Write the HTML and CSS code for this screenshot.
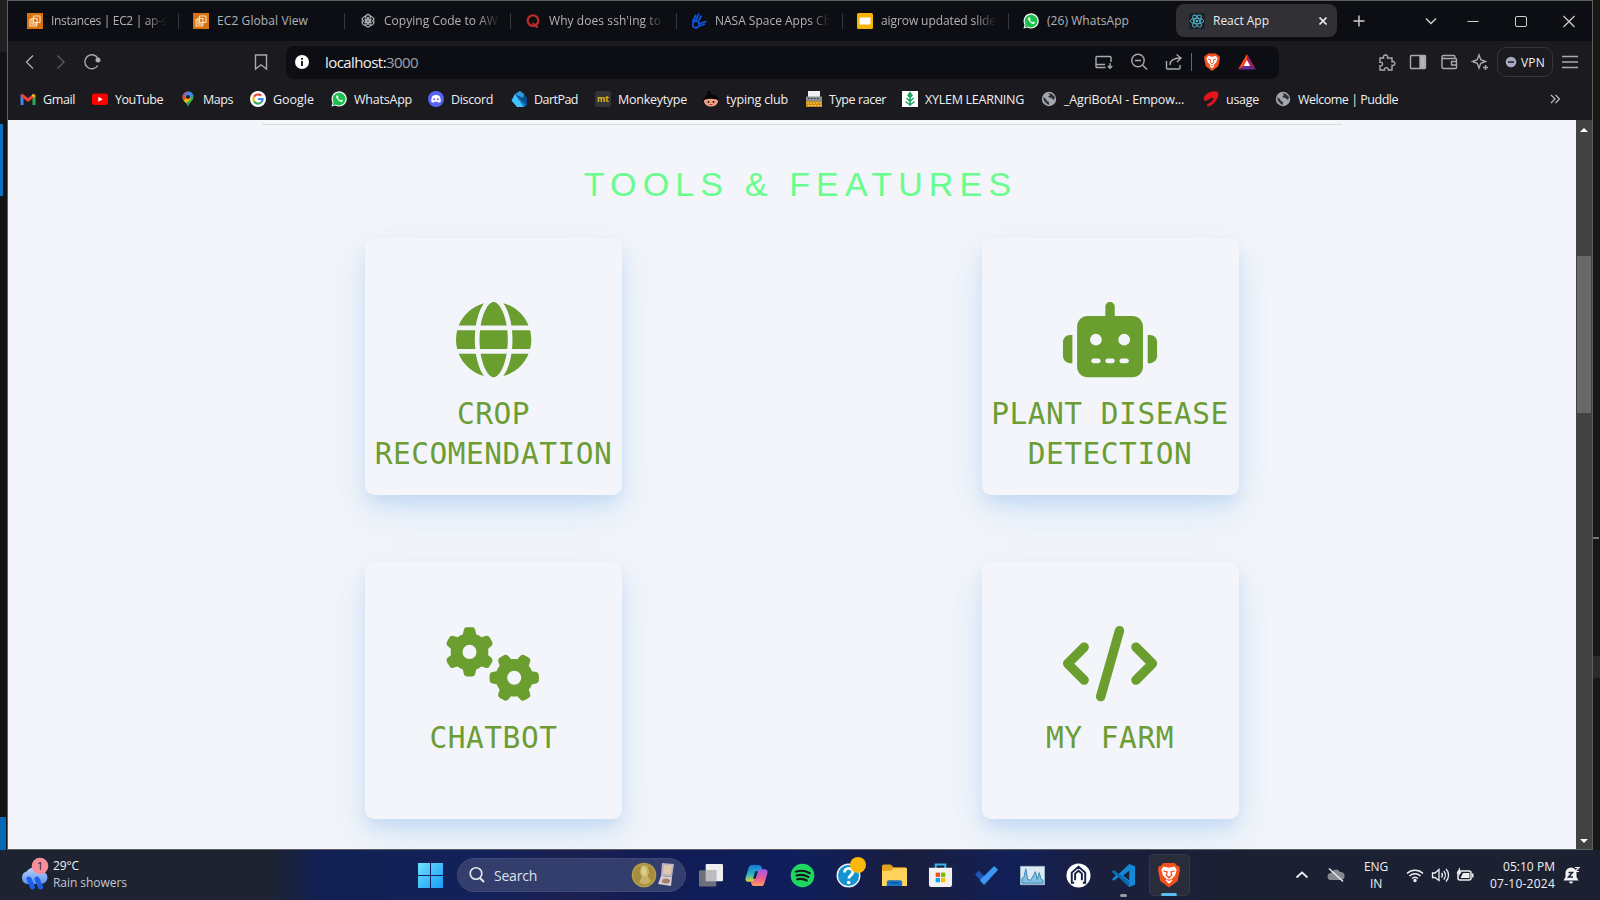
FILE: index.html
```html
<!DOCTYPE html>
<html lang="en">
<head>
<meta charset="utf-8">
<title>React App</title>
<link rel="stylesheet" href="styles.css">
</head>
<body>
<svg class="defs" width="0" height="0" aria-hidden="true">
  <defs>
    <symbol id="ec2" viewBox="0 0 16 16"><rect width="16" height="16" fill="#d9730f"/><g fill="none" stroke="#fbe3c8" stroke-width="1.1"><rect x="6.5" y="3" width="6.5" height="6.5" rx=".5"/><path d="M5 6.5H3V13h6.500v-2"/><rect x="5" y="5.500" width="5" height="5.500"/></g></symbol>
    <symbol id="whatsapp" viewBox="0 0 16 16"><path d="M.5 15.600l1-4A7.600 7.600 0 1 1 4.500 14.600z" fill="#fff"/><path d="M1.700 14.400l.9-3.100a6.400 6.400 0 1 1 2.200 2.200z" fill="#1fbf4f"/><path d="M5.500 4.500c-1.800 1.800 3 7 5.200 6.400 1.300-.5 1.200-1.500.9-1.700l-1.400-.7-.9.9c-1-.4-2-1.400-2.400-2.300l.7-.9-.7-1.600z" fill="#fff"/></symbol>
    <symbol id="globe" viewBox="0 0 16 16"><circle cx="8" cy="8" r="7.200" fill="#a3a7ae"/><path d="M2 6l3 2 1 2 2 1v3l-2-1-3-3zM7 2l2 2-2 2 3 1 3 2 1-3-3-3z" fill="#303238"/></symbol>
    <symbol id="lion" viewBox="0 0 20 20"><path d="M6 1.500h8l2 2 1.500.2.300 3-1.600 7.500L10 19l-6.200-4.800L2.200 6.700l.3-3L4 3.500z" fill="#f4511e"/><path d="M6 4l4 .8L14 4l1.500 2.500-1.300 4L11.500 13l1 1-2.500 2.300L7.500 14l1-1-2.700-2.500-1.300-4z" fill="#fff"/><path d="M6 7l2.700.8L8 10l2 2 2-2-.7-2.200L14 7M8.700 13.200l1.300.6 1.300-.6" fill="none" stroke="#f4511e" stroke-width=".9"/></symbol>
  </defs>
</svg>

<div class="screen">
  <div class="desktop">
    <div class="edge edge-left"><i class="blue-top"></i><i class="blue-bottom"></i></div>

    <div class="window">
      <div class="tabs">
        <div class="tab"><svg viewBox="0 0 16 16"><use href="#ec2"/></svg><span class="label fade"><b data-w="116">Instances | EC2 | ap-s</b></span></div>
        <div class="tab"><svg viewBox="0 0 16 16"><use href="#ec2"/></svg><span class="label"><b data-w="91">EC2 Global View</b></span></div>
        <div class="tab"><svg viewBox="0 0 16 16" fill="none" stroke="#b9bbc0" stroke-width=".8"><path d="M8 1.200a3 3 0 0 1 2.900 2.100l3 1.800v5.600L8 14.200l-5.900-3.500V5.100l3-1.800A3 3 0 0 1 8 1.200z"/><ellipse cx="8" cy="5.600" rx="2.800" ry="3.800"/><ellipse cx="8" cy="5.600" rx="2.800" ry="3.800" transform="rotate(60 8 8)"/><ellipse cx="8" cy="5.600" rx="2.800" ry="3.800" transform="rotate(120 8 8)"/><ellipse cx="8" cy="5.600" rx="2.800" ry="3.800" transform="rotate(180 8 8)"/><ellipse cx="8" cy="5.600" rx="2.800" ry="3.800" transform="rotate(240 8 8)"/><ellipse cx="8" cy="5.600" rx="2.800" ry="3.800" transform="rotate(300 8 8)"/></svg><span class="label fade"><b data-w="114">Copying Code to AW</b></span></div>
        <div class="tab"><svg viewBox="0 0 16 16" fill="none" stroke="#b92b27" stroke-width="2.300"><circle cx="8" cy="7.600" r="5.300"/><path d="M7.500 10.500c2 0 2.500 3.600 5.500 3.500"/></svg><span class="label fade"><b data-w="112">Why does ssh'ing to</b></span></div>
        <div class="tab"><svg viewBox="0 0 16 16" fill="none" stroke="#1155e0" stroke-width="1.700"><circle cx="5" cy="11.500" r="3.300"/><path d="M1.500 9L5 2M4.500 8L8 .5M7 8.500l3.500-6M8.500 10.500l7-2M8 13l6-2"/></svg><span class="label fade"><b data-w="116">NASA Space Apps Ch</b></span></div>
        <div class="tab"><svg viewBox="0 0 16 16"><rect width="16" height="16" rx="1.500" fill="#f4b400"/><rect x="2.500" y="4.500" width="11" height="7" fill="#fff"/></svg><span class="label fade"><b data-w="115">aigrow updated slide</b></span></div>
        <div class="tab last"><svg viewBox="0 0 16 16"><use href="#whatsapp"/></svg><span class="label"><b data-w="82">(26) WhatsApp</b></span></div>
        <div class="tab active"><svg viewBox="0 0 16 16"><rect width="16" height="16" rx="1.500" fill="#1d2026"/><g fill="none" stroke="#4fb5cc" stroke-width=".9"><ellipse cx="8" cy="8" rx="6.800" ry="2.700"/><ellipse cx="8" cy="8" rx="6.800" ry="2.700" transform="rotate(60 8 8)"/><ellipse cx="8" cy="8" rx="6.800" ry="2.700" transform="rotate(120 8 8)"/></g><circle cx="8" cy="8" r="1.300" fill="#4fb5cc"/></svg><span class="label"><b data-w="56">React App</b></span><svg class="x" viewBox="0 0 10 10"><path d="M1.500 1.500l7 7m0-7l-7 7" stroke="#f2f2f2" stroke-width="1.700"/></svg></div>
        <svg class="ctl plus" viewBox="0 0 20 20"><path d="M10 4.500v11M4.500 10h11"/></svg>
        <svg class="ctl down" viewBox="0 0 20 20"><path d="M5 7.500l5 5 5-5"/></svg>
        <svg class="ctl min" viewBox="0 0 20 20"><path d="M4.500 10.500h11"/></svg>
        <svg class="ctl max" viewBox="0 0 20 20"><rect x="4.500" y="5.500" width="11" height="10" rx="1.500"/></svg>
        <svg class="ctl close" viewBox="0 0 20 20"><path d="M4.500 5l11 11m0-11l-11 11"/></svg>
      </div>

      <div class="toolbar">
        <svg class="ic" viewBox="0 0 20 20"><path d="M13 3.500L6.500 10l6.500 6.500"/></svg>
        <svg class="ic fwd" viewBox="0 0 20 20"><path d="M7.500 3.500L14 10l-6.500 6.500"/></svg>
        <svg class="ic reload" viewBox="0 0 20 20"><path d="M15.800 13.500A7 7 0 1 1 16 6.500"/><circle cx="16" cy="8" r="1.800" fill="#b4b5ba"/></svg>
        <svg class="ic mark" viewBox="0 0 20 20"><path d="M4.500 3h11v14L10 12.800 4.500 17z"/></svg>
        <div class="address">
          <svg class="info" viewBox="0 0 20 20"><circle cx="10" cy="10" r="7" fill="#fff"/><path d="M10 9v5M10 6v1.800" stroke="#15161b" stroke-width="1.900"/></svg>
          <span class="url"><b data-w="93">localhost:<i>3000</i></b></span>
          <svg class="ic" viewBox="0 0 20 20"><path d="M11.500 15.500H3a1 1 0 0 1-1-1V5.500a1 1 0 0 1 1-1h13a1 1 0 0 1 1 1V10M2 12.500h9M16 11v5M13.800 14l2.200 2.200 2.200-2.200"/></svg>
          <svg class="ic g15" viewBox="0 0 20 20"><circle cx="9" cy="8.500" r="6.200"/><path d="M13.500 13l4.500 4.500M6 8.500h6"/></svg>
          <svg class="ic g15" viewBox="0 0 20 20"><path d="M2.500 9v7a1 1 0 0 0 1 1H15a1 1 0 0 0 1-1v-3M6 13c0-5 3-7 10.500-7M12.500 2.500L17 6l-4 4"/></svg>
          <i class="sep"></i>
          <svg class="pic brave" viewBox="0 0 20 20"><use href="#lion"/></svg>
          <svg class="pic g15" viewBox="0 0 20 20"><path d="M10 2L1 17.500l9-5z" fill="#ff4724"/><path d="M10 2l9 15.500-9-5z" fill="#9e1f63"/><path d="M1 17.500h18l-9-5z" fill="#662d91"/><path d="M10 8l3.200 6H6.800z" fill="#fff"/></svg>
        </div>
        <svg class="ic puzzle" viewBox="0 0 20 20"><path d="M3 6h3.500c-1.200-4 5.200-4 4 0H15v3.700c3.800-1 3.800 4.600 0 3.600V18h-3.700c.7-3.200-4.600-3.200-3.800 0H3v-4.200c3.400.7 3.400-4.300 0-3.600z"/></svg>
        <svg class="ic g11" viewBox="0 0 20 20"><rect x="2.500" y="3.500" width="15" height="13" rx="1"/><path d="M12 4h5v12h-5z" fill="#b4b5ba"/></svg>
        <svg class="ic g11" viewBox="0 0 20 20"><path d="M16 6.500V5a1.500 1.500 0 0 0-1.500-1.500h-10a1.500 1.500 0 0 0 0 3H16.500a1 1 0 0 1 1 1v8a1 1 0 0 1-1 1h-12A1.500 1.500 0 0 1 3 15V5M17.500 9.500H12.500v3.500h5"/></svg>
        <svg class="ic g11" viewBox="0 0 20 20"><path d="M9 3l1.800 4.700L15.500 9.500l-4.700 1.800L9 16l-1.800-4.700L2.500 9.500l4.700-1.800zM15.500 13v5M13 15.500h5"/></svg>
        <div class="vpn"><svg viewBox="0 0 12 12"><circle cx="6" cy="6" r="5.300" fill="#a5a9c2"/><path d="M3 6h6" stroke="#1b1b20" stroke-width="1.500"/></svg><b data-w="24">VPN</b></div>
        <svg class="ic menu" viewBox="0 0 20 20"><path d="M2 4.500h16M2 10h16M2 15.500h16"/></svg>
      </div>

      <div class="bookmarks">
        <div><svg viewBox="0 0 16 16" fill="none" stroke-width="3"><path d="M2 14V3.500" stroke="#4285f4"/><path d="M14 14V3.500" stroke="#34a853"/><path d="M1.500 4L8 9l6.500-5" stroke="#ea4335"/><path d="M12.500 5.500L14.500 4" stroke="#fbbc04"/></svg><b data-w="32">Gmail</b></div>
        <div><svg viewBox="0 0 16 16"><rect y="2.500" width="16" height="11.500" rx="2.500" fill="#f00"/><path d="M6.300 5.700v5l4.400-2.500z" fill="#fff"/></svg><b data-w="48">YouTube</b></div>
        <div><svg viewBox="0 0 16 16"><path d="M2.500 6a5.500 5.500 0 0 1 11 0c0 4-4.300 5-5.500 10C7 11.500 2.500 10 2.500 6z" fill="#34a853"/><path d="M2.500 6A5.500 5.500 0 0 1 8 .5V6L4 10.300C3 9 2.500 7.800 2.500 6z" fill="#ea4335"/><path d="M8 .5A5.500 5.500 0 0 1 13.300 4.500L8 10 4 4z" fill="#4285f4"/><path d="M3.700 9.800L9 4l2 4-5 4z" fill="#fbbc04"/><circle cx="8" cy="6" r="2" fill="#222"/></svg><b data-w="30">Maps</b></div>
        <div><svg viewBox="0 0 16 16"><circle cx="8" cy="8" r="8" fill="#fff"/><g fill="none" stroke-width="2.200"><path d="M11.200 4.800A4.600 4.600 0 0 0 4 5.700" stroke="#ea4335"/><path d="M4 5.700a4.600 4.600 0 0 0 0 4.600" stroke="#fbbc04"/><path d="M4 10.300a4.600 4.600 0 0 0 7 1.200" stroke="#34a853"/><path d="M11 11.500A4.600 4.600 0 0 0 12.600 8H8" stroke="#4285f4"/></g></svg><b data-w="41">Google</b></div>
        <div><svg viewBox="0 0 16 16"><use href="#whatsapp"/></svg><b data-w="58">WhatsApp</b></div>
        <div><svg viewBox="0 0 16 16"><circle cx="8" cy="8" r="8" fill="#5865f2"/><path d="M4.500 5c2-1.300 5-1.300 7 0 1 2 1.500 4 1.300 5.500-1 .8-2 1.200-2.500 1.200l-.7-1H6.400l-.7 1c-.7 0-1.600-.4-2.500-1.200C3 9 3.500 7 4.500 5z" fill="#fff"/><circle cx="6.200" cy="8.200" r="1" fill="#5865f2"/><circle cx="9.800" cy="8.200" r="1" fill="#5865f2"/></svg><b data-w="42">Discord</b></div>
        <div><svg viewBox="0 0 16 16"><path d="M1 9L4 3l5-3 4 3 3 4v7l-3 2H6z" fill="#0b4e8f"/><path d="M4 3L.5 9.500 6 16h7z" fill="#40c4ff"/><path d="M4 3l5-3 4 3-1 4z" fill="#2b9bdc"/><path d="M4 3l11 11-2 2z" fill="#1a78bd"/></svg><b data-w="44">DartPad</b></div>
        <div><svg viewBox="0 0 16 16"><rect width="16" height="16" rx="3" fill="#323437"/><text x="8" y="11" text-anchor="middle" font-size="8.500" font-weight="700" fill="#e2b714">mt</text></svg><b data-w="69">Monkeytype</b></div>
        <div><svg viewBox="0 0 16 16"><circle cx="6" cy="2" r="2" fill="#050505"/><ellipse cx="8" cy="10" rx="7" ry="5.500" fill="#f0a184"/><path d="M0 10C0 1 16 1 16 10c-3-3-13-3-16 0z" fill="#080808"/><circle cx="5.500" cy="11" r=".9"/><circle cx="10.500" cy="11" r=".9"/><path d="M6.500 13.500h3" stroke="#a33"/></svg><b data-w="62">typing club</b></div>
        <div><svg viewBox="0 0 16 16"><path d="M2 0h12v6H2z" fill="#eef0f4"/><path d="M0 5.500h16V10H0z" fill="#8b8f97"/><path d="M0 10h16v6H0z" fill="#c98d12"/><path d="M2 7.500h12" stroke="#33363c" stroke-dasharray="1.500 1.500"/><path d="M1 12h14M2 14.500h14" stroke="#f4d060" stroke-dasharray="2 1"/></svg><b data-w="57">Type racer</b></div>
        <div><svg viewBox="0 0 16 16"><path d="M0 0h16v16H0z" fill="#fff"/><path d="M8 15V4M8 14L3.500 10.500M8 14l4.500-3.500M8 10.500L4.500 7M8 10.500L11.500 7M8 6.500l-2-2 2-3 2 3z" stroke="#1fa463" stroke-width="1.500" fill="#1fa463"/></svg><b data-w="99">XYLEM LEARNING</b></div>
        <div><svg viewBox="0 0 16 16"><use href="#globe"/></svg><b data-w="120">_AgriBotAI - Empow...</b></div>
        <div><svg viewBox="0 0 16 16"><path d="M.8 7C2 2 11-1 14.500.8c2 2 .5 6.500-2.500 10.200-2 2.500-6 5-7.500 4.500-1.300-.8-.3-2.300 2-3.500 2.500-1.500 4.500-4 3.500-5-1.200-.8-4 1.500-6 2.500-2 .9-3.400 0-3.200-2.500z" fill="#e4141c"/></svg><b data-w="33">usage</b></div>
        <div><svg viewBox="0 0 16 16"><use href="#globe"/></svg><b data-w="100">Welcome | Puddle</b></div>
        <svg class="more" viewBox="0 0 12 12"><path d="M2 2l4 4-4 4M6.500 2l4 4-4 4"/></svg>
      </div>

      <div class="viewport">
        <main class="page">
          <hr>
          <h1>TOOLS &amp; FEATURES</h1>
          <section class="cards">
            <article class="card">
              <svg viewBox="0 0 512 512"><path d="M352 256c0 22.200-1.200 43.600-3.300 64H163.300c-2.200-20.400-3.300-41.800-3.300-64s1.200-43.600 3.300-64H348.700c2.200 20.400 3.300 41.800 3.300 64zm28.800-64H503.900c5.300 20.500 8.100 41.900 8.100 64s-2.800 43.500-8.100 64H380.800c2.100-20.600 3.200-42 3.200-64s-1.100-43.400-3.200-64zm112.600-32H376.700c-10-63.900-29.800-117.400-55.300-151.600c78.300 20.700 142 77.500 171.900 151.600zm-149.100 0H167.700c6.100-36.400 15.500-68.600 27-94.700c10.500-23.600 22.200-40.700 33.500-51.500C239.400 3.200 248.700 0 256 0s16.600 3.200 27.800 13.800c11.300 10.800 23 27.900 33.500 51.500c11.600 26 20.900 58.200 27 94.700zm-209 0H18.600C48.600 85.900 112.200 29.100 190.600 8.400C165.100 42.600 145.300 96.100 135.300 160zM8.100 192H131.200c-2.100 20.600-3.200 42-3.200 64s1.100 43.400 3.200 64H8.100C2.800 299.500 0 278.100 0 256s2.800-43.500 8.100-64zM194.700 446.600c-11.600-26-20.900-58.200-27-94.600H344.300c-6.100 36.400-15.500 68.600-27 94.600c-10.500 23.600-22.200 40.700-33.500 51.500C272.600 508.800 263.300 512 256 512s-16.600-3.200-27.800-13.800c-11.300-10.800-23-27.900-33.500-51.500zM135.300 352c10 63.900 29.800 117.400 55.300 151.600C112.200 482.900 48.600 426.100 18.600 352H135.300zm358.100 0c-30 74.100-93.600 130.900-171.900 151.600c25.500-34.200 45.200-87.700 55.300-151.600H493.400z"/></svg>
              <h2>CROP<br>RECOMENDATION</h2>
            </article>
            <article class="card">
              <svg viewBox="0 0 640 512"><path d="M320 0c17.700 0 32 14.300 32 32V96H472c39.800 0 72 32.200 72 72V440c0 39.800-32.200 72-72 72H168c-39.800 0-72-32.200-72-72V168c0-39.800 32.200-72 72-72H288V32c0-17.700 14.300-32 32-32zM208 384c-8.800 0-16 7.200-16 16s7.200 16 16 16h32c8.800 0 16-7.200 16-16s-7.200-16-16-16H208zm96 0c-8.800 0-16 7.200-16 16s7.200 16 16 16h32c8.800 0 16-7.200 16-16s-7.200-16-16-16H304zm96 0c-8.800 0-16 7.200-16 16s7.200 16 16 16h32c8.800 0 16-7.200 16-16s-7.200-16-16-16H400zM264 256a40 40 0 1 0 -80 0 40 40 0 1 0 80 0zm152 40a40 40 0 1 0 0-80 40 40 0 1 0 0 80zM48 224H64V416H48c-26.500 0-48-21.500-48-48V272c0-26.500 21.500-48 48-48zm544 0c26.500 0 48 21.500 48 48v96c0 26.500-21.500 48-48 48H576V224h16z"/></svg>
              <h2>PLANT DISEASE<br>DETECTION</h2>
            </article>
            <article class="card">
              <svg viewBox="0 0 640 512"><path id="gear" d="M308.500 135.300c7.100-6.300 9.900-16.200 6.200-25c-2.300-5.300-4.800-10.500-7.600-15.500L304 89.400c-3-5-6.300-9.900-9.800-14.600c-5.700-7.600-15.700-10.100-24.700-7.100l-28.200 9.300c-10.700-8.800-23-16-36.200-20.900L199 27.100c-1.900-9.300-9.100-16.700-18.500-17.800C173.900 8.400 167.200 8 160.400 8h-.7c-6.800 0-13.500 .4-20.100 1.200c-9.400 1.100-16.600 8.600-18.500 17.800L115 56.100c-13.300 5-25.500 12.100-36.200 20.900L50.500 67.800c-9-3-19-.5-24.700 7.100c-3.500 4.700-6.800 9.600-9.900 14.600l-3 5.300c-2.800 5-5.300 10.200-7.600 15.600c-3.700 8.700-.9 18.600 6.200 25l22.200 19.800C32.600 161.900 32 168.900 32 176s.6 14.100 1.700 20.900L11.500 216.700c-7.100 6.300-9.900 16.200-6.200 25c2.300 5.300 4.800 10.500 7.600 15.600l3 5.200c3 5.100 6.300 9.900 9.900 14.600c5.700 7.600 15.700 10.100 24.700 7.100l28.200-9.300c10.700 8.800 23 16 36.200 20.900l6.100 29.100c1.900 9.300 9.100 16.700 18.500 17.800c6.700 .8 13.500 1.200 20.400 1.200s13.700-.4 20.400-1.200c9.400-1.100 16.600-8.600 18.500-17.800l6.100-29.100c13.300-5 25.500-12.100 36.200-20.900l28.200 9.300c9 3 19 .5 24.700-7.100c3.500-4.700 6.800-9.500 9.800-14.600l3.100-5.400c2.800-5 5.300-10.200 7.600-15.500c3.700-8.700 .9-18.600-6.200-25l-22.200-19.800c1.100-6.800 1.700-13.800 1.700-20.900s-.6-14.100-1.700-20.900l22.200-19.800zM112 176a48 48 0 1 1 96 0 48 48 0 1 1 -96 0z"/><use href="#gear" transform="translate(464 352) rotate(90) translate(-160 -176)"/></svg>
              <h2>CHATBOT</h2>
            </article>
            <article class="card">
              <svg viewBox="0 0 640 512"><path d="M392.800 1.200c-17-4.900-34.700 5-39.600 22l-128 448c-4.900 17 5 34.700 22 39.600s34.700-5 39.600-22l128-448c4.900-17-5-34.700-22-39.600zm80.600 120.100c-12.500 12.500-12.500 32.800 0 45.300L562.700 256l-89.400 89.400c-12.500 12.500-12.500 32.800 0 45.300s32.800 12.500 45.300 0l112-112c12.500-12.500 12.500-32.800 0-45.300l-112-112c-12.500-12.500-32.800-12.500-45.300 0zm-306.700 0c-12.500-12.500-32.800-12.500-45.300 0l-112 112c-12.500 12.500-12.500 32.800 0 45.300l112 112c12.500 12.500 32.800 12.500 45.300 0s12.500-32.800 0-45.300L77.300 256l89.400-89.400c12.500-12.500 12.500-32.800 0-45.300z"/></svg>
              <h2>MY FARM</h2>
            </article>
          </section>
        </main>
        <div class="scrollbar"><svg viewBox="0 0 10 6"><path d="M1 5l4-4 4 4z"/></svg><i></i><svg class="dn" viewBox="0 0 10 6"><path d="M1 1l4 4 4-4z"/></svg></div>
      </div>
    </div>

    <div class="edge edge-right"><i class="tick"></i><i class="block"></i></div>
  </div>

  <footer class="taskbar">
    <div class="weather">
      <svg viewBox="0 0 32 36"><defs><linearGradient id="cl" x2="0" y2="1"><stop stop-color="#b9d2fb"/><stop offset="1" stop-color="#5d94f0"/></linearGradient></defs><path d="M8 27a6.500 6.500 0 0 1-.5-12.500A9 9 0 0 1 22 14a6.500 6.500 0 0 1 0 13z" fill="url(#cl)"/><path d="M10 22l3.500 8M18 22l3.500 8" stroke="#1d5fe6" stroke-width="5" stroke-linecap="round"/><circle cx="21" cy="9" r="8.300" fill="#f78f9b"/><text x="21" y="13" font-size="11.500" text-anchor="middle" fill="#222">1</text></svg>
      <div class="wtext"><b data-w="26">29°C</b><b class="dim" data-w="74">Rain showers</b></div>
    </div>
    <svg class="start" viewBox="0 0 25 25"><defs><linearGradient id="win" x2="1" y2="1"><stop stop-color="#6fe0ff"/><stop offset="1" stop-color="#169bf5"/></linearGradient></defs><path d="M0 0h12v12H0zM13 0h12v12H13zM0 13h12v12H0zM13 13h12v12H13z" fill="url(#win)"/></svg>
    <div class="search">
      <svg class="mag" viewBox="0 0 18 18"><circle cx="8" cy="7.500" r="5.800" fill="none" stroke="#e8e9f0" stroke-width="1.600"/><path d="M12 12l4 4" stroke="#e8e9f0" stroke-width="2"/></svg>
      <b data-w="43">Search</b>
      <svg class="medal" viewBox="0 0 46 28"><circle cx="13" cy="14" r="12.300" fill="#b39a4c"/><circle cx="13" cy="14" r="10.500" fill="#a88d3e"/><path d="M10 5c4-2 8 0 7.500 4l1 3-1.500 1v3l3 4c-3 4-9 4-12 1l3-5-2-4z" fill="#c8b267"/><path d="M11 6c3-1 5 1 4.500 4l.5 3-2 2-3-1-1-4z" fill="#dccb88"/><path d="M31 2l12 1-2 13-11-1z" fill="#b9b2c0"/><path d="M33 4l8 .5-1.300 9-7.700-.5z" fill="#dfc6b0"/><path d="M30 15l11 1-1 9-13-2z" fill="#d4cfd6"/><ellipse cx="35" cy="20" rx="4" ry="2.500" fill="#a97e68"/></svg>
    </div>
    <div class="apps">
      <span><svg viewBox="0 0 26 26"><rect x="8" y="1" width="18" height="18" rx="1" fill="#eceef0"/><rect x="1" y="7.500" width="18" height="17" rx="1" fill="#858585" fill-opacity=".8"/><path d="M8 7.500h11V19H8z" fill="#bdbdbd"/></svg></span>
      <span><svg viewBox="0 0 26 26"><defs><linearGradient id="cpa" x2="0" y2="1"><stop stop-color="#1877d8"/><stop offset=".55" stop-color="#26b6c0"/><stop offset="1" stop-color="#e8d234"/></linearGradient><linearGradient id="cpb" x2="0" y2="1"><stop stop-color="#9a5cf0"/><stop offset=".55" stop-color="#ee5b94"/><stop offset="1" stop-color="#ffa05c"/></linearGradient></defs><path d="M8 2h7c2 0 3 1 3.500 3l.7 2.500h-3.500L12 16c-.7 2.500-1.500 3.500-4 3.500H4.500C2 19.500 1 17.500 1.700 15L5 4.500C5.500 3 6.500 2 8 2z" fill="url(#cpa)"/><path d="M18 24h-7c-2 0-3-1-3.500-3L6.800 19h3.500L14 10c.7-2.500 1.500-3.500 4-3.500h3.500c2.500 0 3.500 2 2.800 4.500L21 21.500c-.5 1.500-1.500 2.500-3 2.500z" fill="url(#cpb)"/><path d="M11.500 8.500h3l-2.500 8H9.500z" fill="#14205a"/></svg></span>
      <span><svg viewBox="0 0 26 26"><circle cx="13" cy="13" r="12.300" fill="#1ed760"/><path d="M6 9c5-1.700 10-1 14.500 1.500M6.800 13c4.500-1.300 8.500-.8 12.300 1.400M7.500 17c3.700-1 7-.6 10 1.200" fill="none" stroke="#11181a" stroke-width="2.200" stroke-linecap="round"/></svg></span>
      <span class="help"><svg viewBox="0 0 26 26"><circle cx="13" cy="13" r="11.700" fill="#1593d1" stroke="#eef6fb" stroke-width="1.500"/><path d="M8.800 10c0-6 9-5.700 8.800-.6 0 3.300-4.300 3-4.300 6.800" fill="none" stroke="#fff" stroke-width="3"/><circle cx="13.200" cy="20.300" r="1.900" fill="#fff"/></svg><i></i></span>
      <span><svg viewBox="0 0 26 26"><path d="M0 3.500a2 2 0 0 1 2-2h7l3 3h12a2 2 0 0 1 2 2V22a2 2 0 0 1-2 2H0z" fill="#e6a21b"/><path d="M0 8h9l3-2.500h14V24H0z" fill="#ffd35a"/><path d="M5 24v-4a2 2 0 0 1 2-2h12a2 2 0 0 1 2 2v4z" fill="#1677c4"/><path d="M8 20.500h10" stroke="#0c5591" stroke-width="1.500"/></svg></span>
      <span><svg viewBox="0 0 26 26"><path d="M8 6V1.500h10V6" fill="none" stroke="#37b8ea" stroke-width="2"/><path d="M1 5h24v17a3 3 0 0 1-3 3H4a3 3 0 0 1-3-3z" fill="#f1f1f1"/><path d="M8 10h4.500v4.500H8z" fill="#f25022"/><path d="M13.500 10H18v4.500h-4.500z" fill="#7fba00"/><path d="M8 15.500h4.500V20H8z" fill="#00a4ef"/><path d="M13.500 15.500H18V20h-4.500z" fill="#ffb900"/></svg></span>
      <span><svg viewBox="0 0 26 26"><path d="M1 12l4-4 6 6-3.500 5z" fill="#1c55b8"/><path d="M21 3l4 4-14.500 16L6 18z" fill="#3c96f2"/></svg></span>
      <span><svg viewBox="0 0 26 26"><path d="M.5 3.500h25v19H.5z" fill="#dbe9f2" stroke="#9fb8c6"/><path d="M2 21v-5l2-1 2-9 2 11 3 1 3-5 2-4 2 8 2-7 2 7 2 1v3z" fill="#83bfe2" stroke="#3585b5"/></svg></span>
      <span><svg viewBox="0 0 26 26"><circle cx="13" cy="13" r="12.500" fill="#fff"/><path d="M8.500 20.500H6V10l7-6 7 6v10.500h-2.500M9.500 18v-7l3.500-3 3.500 3v7" fill="none" stroke="#18214a" stroke-width="2"/></svg></span>
      <span class="run"><svg viewBox="0 0 26 26"><path d="M19 1l6 2.500v19L19 25 8 14.500 3 18.500l-2-1.500 4-4-4-4 2-1.500 5 4zM19 8l-6.500 5 6.500 5z" fill="#1688d8"/><path d="M1 9l2-1.500 16 12V25L8 14.500z" fill="#0b68b0"/></svg></span>
      <span class="run current"><svg viewBox="0 0 20 20"><use href="#lion"/></svg></span>
    </div>
    <div class="tray">
      <svg class="t-up" viewBox="0 0 20 20"><path d="M4.500 12.500L10 7.500l5.500 5" fill="none" stroke="#f0f0f2" stroke-width="1.700"/></svg>
      <svg class="t-cloud" viewBox="0 0 20 20"><path d="M5 15a3.500 3.500 0 0 1 0-7 5 5 0 0 1 9-1 4 4 0 0 1 1 8z" fill="#868a92"/><path d="M3 3.500l14 13" stroke="#f0f0f2" stroke-width="1.400"/></svg>
      <div class="lang"><b data-w="24">ENG</b><b data-w="12">IN</b></div>
      <svg class="t-wifi" viewBox="0 0 20 20" fill="none" stroke="#f0f0f2" stroke-width="1.500"><path d="M2 8.500a11.500 11.500 0 0 1 16 0M4.500 11a8 8 0 0 1 11 0M7 13.500a4.500 4.500 0 0 1 6 0"/><circle cx="10" cy="15.500" r="1" fill="#f0f0f2"/></svg>
      <svg class="t-vol" viewBox="0 0 20 20" fill="none" stroke="#f0f0f2" stroke-width="1.300"><path d="M2.500 8H5l4-3.500v11L5 12.500H2.500zM11.500 8a3.500 3.500 0 0 1 0 4.500M13.700 6a6.500 6.500 0 0 1 0 8.500M16 4a9 9 0 0 1 0 12.500"/></svg>
      <svg class="t-bat" viewBox="0 0 20 20"><rect x="3" y="6" width="13" height="9" rx="2" fill="none" stroke="#f0f0f2" stroke-width="1.500"/><path d="M8 8h6.500v5H5.500z" fill="#f0f0f2"/><path d="M17 8.500h1.500v4H17z" fill="#f0f0f2"/><path d="M5 2L1.500 8.500H4L3 12l4-5.500H5z" fill="#f0f0f2"/></svg>
      <div class="clock"><b data-w="52">05:10 PM</b><b data-w="65">07-10-2024</b></div>
      <svg class="t-bell" viewBox="0 0 20 20"><path d="M2.500 15.500L4.500 12V8a5.500 5.500 0 0 1 11 0v4l2 3.500zM8 16.500h4a2 2 0 0 1-4 0z" fill="#f4f4f6"/><path d="M7.500 7.500h4l-4 4.500h4.500" fill="none" stroke="#1b2130" stroke-width="1.500"/><path d="M14 2.500h4L14 6.500h4" fill="none" stroke="#f4f4f6" stroke-width="1.200"/></svg>
    </div>
  </footer>
</div>
<script src="script.js"></script>
</body>
</html>
```

FILE: styles.css
```css
* { box-sizing: border-box; }
body { margin: 0; font-family: "Open Sans", "Noto Sans", sans-serif; overflow: hidden; }
b, i { font-weight: 400; font-style: normal; }
svg { display: block; flex: none; }
.defs { display: none; }
b[data-w] { display: inline-block; white-space: pre; }

.screen { width: 1600px; height: 900px; display: flex; flex-direction: column; background: #141414; overflow: hidden; }
.desktop { height: 850px; flex: none; display: flex; }

/* slivers of the window behind the browser */
.edge { width: 7px; flex: none; display: flex; flex-direction: column; background: #131313; }
.edge-left { border-top: 52px solid #202020; }
.blue-top { width: 3px; height: 72px; margin-top: 72px; margin-bottom: auto; background: #0c6fc0; }
.edge-left .blue-bottom { width: 6px; height: 33px; background: #0668b3; }
.edge-right { background: #171714; }
.tick { width: 6px; height: 2px; margin-top: 537px; background: #777; }
.block { width: 7px; height: 22px; margin-top: 117px; background: #2b2b29; }

.window { width: 1586px; flex: none; height: 850px; border: 1px solid #5d6063; background: #1b1a1f; display: flex; flex-direction: column; }

.tabs { height: 40px; flex: none; background: #0d0e13; display: flex; align-items: center; padding: 0 0 1px 5px; }
.tab { width: 166px; flex: none; height: 32px; padding-left: 14px; display: flex; align-items: center; gap: 8px; color: #b2b3b8; font-size: 12px; position: relative; }
.tab > svg { width: 16px; height: 16px; }
.tab:not(.last):not(.active)::after { content: ""; position: absolute; right: 0; top: 8px; width: 1px; height: 16px; background: #36383e; }
.tab:nth-child(3) { padding-left: 15px; }
.tab.last { width: 167px; }
.label { width: 118px; white-space: nowrap; overflow: hidden; }
.fade { -webkit-mask-image: linear-gradient(90deg, #000 80%, transparent 98%); mask-image: linear-gradient(90deg, #000 80%, transparent 98%); }
.tab.active { width: 161px; height: 33px; padding-left: 13px; background: #303035; border-radius: 8px; color: #ededf0; }
.tab.active .label { width: 97px; }
.tab.active .x { width: 10px; height: 10px; }
.ctl { width: 20px; height: 20px; fill: none; stroke: #cfd0d4; stroke-width: 1.4; }
.plus { margin-left: 12px; }
.down { margin-left: 52px; }
.min { margin-left: 22px; stroke-width: 1; }
.max { margin-left: 28px; stroke-width: 1; }
.close { margin-left: 28px; stroke-width: 1.2; }

.toolbar { height: 38px; flex: none; display: flex; align-items: center; padding: 4px 0 0 12px; }
.ic { width: 20px; height: 20px; fill: none; stroke: #a9aaaf; stroke-width: 1.4; }
.fwd { margin-left: 10px; stroke: #5a5a60; }
.reload { margin-left: 12px; }
.mark { margin-left: 149px; }
.address { width: 993px; height: 33px; margin-left: 15px; padding: 0 22px 0 6px; border-radius: 8px; background: #0d0e13; display: flex; align-items: center; }
.info, .pic { width: 20px; height: 20px; }
.url { margin-left: 13px; flex: 1; font-size: 15px; line-height: 20px; padding-bottom: 1px; color: #f0f0f3; }
.url i { color: #a0a1a7; }
.g15 { margin-left: 15px; }
.g11 { margin-left: 11px; }
.sep { width: 1px; height: 18px; margin-left: 7px; background: #66686f; }
.brave { margin-left: 10px; }
.puzzle { margin-left: 98px; }
.vpn { width: 56px; height: 30px; margin-left: 7px; border: 1px solid #35353b; border-radius: 9px; display: flex; align-items: center; gap: 4px; padding-left: 7px; font-size: 12px; color: #f1f1f3; }
.vpn svg { width: 12px; height: 12px; }
.menu { margin-left: 7px; }

.bookmarks { height: 41px; flex: none; padding: 0 0 1px 12px; display: grid; grid-template-columns: 72px 88px 70px 81px 97px 83px 84px 108px 103px 96px 139px 162px 72px 274px 12px; align-items: center; font-size: 12.500px; color: #f0f0f2; }
.bookmarks > div { display: flex; align-items: center; gap: 7px; white-space: nowrap; }
.bookmarks > div > svg { width: 16px; height: 16px; }
.more { width: 12px; height: 12px; fill: none; stroke: #bbbcc1; stroke-width: 1.2; }

.viewport { flex: 1; min-height: 0; display: flex; overflow: hidden; background: #f3f5fa; }
.page { width: 1568px; flex: none; overflow: hidden; }
.page hr { width: 1080px; height: 1px; margin: 4px 0 0 254px; border: 0; background: #d3dfd7; }
.page h1 { margin: 40px 0 0 11px; height: 40px; text-align: center; font: 400 34px/39px "Liberation Sans", Arial, sans-serif; letter-spacing: 6.150px; color: #68fd8d; padding-left: 6px; }
.cards { display: grid; grid-template-columns: 257px 257px; column-gap: 359.500px; row-gap: 66.500px; margin: 33px 0 0 357px; }
.card { height: 257px; padding-top: 64px; border-radius: 9px; background: #f3f5fa; box-shadow: 0 16px 44px rgba(20, 140, 220, .14), 0 9px 16px -2px rgba(30, 110, 230, .13); display: flex; flex-direction: column; align-items: center; }
.card svg { height: 75.300px; fill: #6a9e2e; overflow: visible; }
.card h2 { margin: 17px 0 0; text-align: center; white-space: nowrap; font: 400 29.500px/40px "DejaVu Sans Mono", monospace; letter-spacing: .5px; color: #6c9d35; }

.scrollbar { width: 16px; background: #424242; display: flex; flex-direction: column; align-items: center; padding: 7px 0 5px; }
.scrollbar svg { width: 10px; height: 6px; fill: #fff; }
.scrollbar i { width: 14px; height: 157px; margin-top: 123px; background: #696969; }
.scrollbar .dn { margin-top: auto; }

.taskbar { height: 50px; display: flex; align-items: center; color: #f0f1f4; background: linear-gradient(90deg, #1d2330 0, #1d2330 270px, #122152 315px, #12215a 480px, #1b2050 570px, #111c55 660px, #0f1f5c 800px, #1a1e3e 910px, #122058 1010px, #1a1f3d 1100px, #1b2134 1220px, #1b2130 1600px); }
.weather { display: flex; width: 418px; padding-left: 19px; gap: 2px; }
.weather svg { width: 32px; height: 36px; }
.wtext { display: flex; flex-direction: column; align-items: flex-start; font-size: 12px; line-height: 17px; }
.dim { color: #c5c8cf; }
.start { width: 25px; height: 25px; }
.search { width: 229px; height: 34px; margin-left: 14px; padding-left: 10px; border-radius: 17px; border: 1px solid #3e4875; background: #333e6d; display: flex; align-items: center; font-size: 14px; color: #dfe0ea; }
.mag { width: 18px; height: 18px; margin-right: 8px; }
.medal { width: 46px; height: 28px; margin-left: auto; margin-right: 8px; }
.apps { display: flex; margin-left: 2px; }
.apps span { width: 45.900px; height: 42px; position: relative; display: flex; align-items: center; justify-content: center; }
.apps svg { width: 25px; height: 25px; }
.help i { position: absolute; right: 6px; top: 3px; width: 16px; height: 16px; border-radius: 50%; background: #fcb80b; }
.run::after { content: ""; position: absolute; bottom: -1px; width: 7px; height: 3px; border-radius: 2px; background: #9a9ca5; }
.apps .current { width: 41px; margin-left: 2px; background: #282c3b; border: 1px solid #363a48; border-radius: 5px; }
.current::after { width: 16px; background: #5ebcf0; }
.apps .current svg { width: 28px; height: 28px; }
.tray { flex: 1; display: flex; align-items: center; justify-content: flex-end; padding-right: 19px; font-size: 12px; line-height: 17px; }
.tray svg { width: 20px; height: 20px; }
.t-cloud { margin-left: 14px; }
.lang { display: flex; flex-direction: column; align-items: center; width: 40px; margin-left: 10px; }
.t-wifi { margin-left: 9px; }
.t-vol, .t-bat { margin-left: 5px; }
.clock { display: flex; flex-direction: column; align-items: flex-end; margin-left: 15px; width: 65px; }
.t-bell { margin-left: 6px; }
```

FILE: script.js
```js
// Tracks each chrome label so that it fills its nominal width.
document.querySelectorAll('b[data-w]').forEach(function (el) {
  var target = Number(el.dataset.w);
  var natural = el.getBoundingClientRect().width;
  el.style.letterSpacing = (target - natural) / el.textContent.length + 'px';
});
```
